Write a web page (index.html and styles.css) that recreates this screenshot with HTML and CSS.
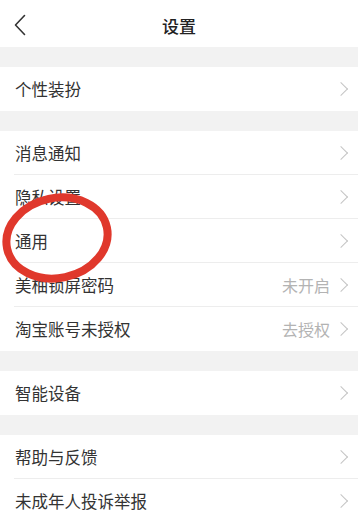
FILE: index.html
```html
<!DOCTYPE html>
<html lang="zh">
<head>
<meta charset="utf-8">
<link rel="stylesheet" href="styles.css">
</head>
<body>
<div class="page">
  <header class="nav">
    <svg class="back" width="12" height="22" viewBox="0 0 12 22"><path d="M10.5 1.5 L1.5 11 L10.5 20.5" fill="none" stroke="#333" stroke-width="1.6" stroke-linecap="round" stroke-linejoin="round"/></svg>
    <h1 class="title">设置</h1>
  </header>

  <section class="group">
    <div class="row"><span class="label">个性装扮</span><span class="chev"></span></div>
  </section>

  <section class="group">
    <div class="row"><span class="label">消息通知</span><span class="chev"></span></div>
    <div class="row"><span class="label">隐私设置</span><span class="chev"></span></div>
    <div class="row"><span class="label">通用</span><span class="chev"></span></div>
    <div class="row"><span class="label">美柚锁屏密码</span><span class="value">未开启</span><span class="chev"></span></div>
    <div class="row"><span class="label">淘宝账号未授权</span><span class="value">去授权</span><span class="chev"></span></div>
  </section>

  <section class="group">
    <div class="row"><span class="label">智能设备</span><span class="chev"></span></div>
  </section>

  <section class="group">
    <div class="row"><span class="label">帮助与反馈</span><span class="chev"></span></div>
    <div class="row"><span class="label">未成年人投诉举报</span><span class="chev"></span></div>
  </section>

  <svg class="mark" width="130" height="115" viewBox="0 0 130 115">
    <ellipse cx="57" cy="52" rx="51" ry="40" fill="none" stroke="#e0382c" stroke-width="8" transform="rotate(-12 57 52)"/>
  </svg>
</div>
</body>
</html>
```

FILE: styles.css
```css
html, body {
  margin: 0;
  padding: 0;
  background: #f2f2f2;
}
body {
  font-family: "Noto Sans CJK SC", "Noto Sans", sans-serif;
  color: #333;
}
.page {
  position: relative;
  width: 358px;
  height: 517px;
  overflow: hidden;
  background: #f2f2f2;
}
.nav {
  height: 47px;
  background: #fff;
  display: flex;
  align-items: center;
  justify-content: center;
  position: relative;
}
.back {
  position: absolute;
  left: 14px;
  top: 14px;
}
.title {
  margin: 0;
  font-size: 17px;
  font-weight: 500;
  color: #222;
  line-height: 1;
  margin-top: 4px;
}
.group {
  background: #fff;
  margin-top: 20px;
  padding-left: 14px;
}
.row {
  height: 43px;
  display: flex;
  align-items: center;
  border-bottom: 1px solid #ededed;
  padding-right: 11px;
}
.row:last-child {
  height: 44px;
  border-bottom: none;
}
.label {
  flex: 1;
  font-size: 16.5px;
  color: #333;
  padding-left: 1px;
}
.value {
  font-size: 16px;
  color: #b3b3b3;
  margin-right: 6px;
}
.chev {
  width: 9px;
  height: 9px;
  border-top: 1.3px solid #c4c4c4;
  border-right: 1.3px solid #c4c4c4;
  transform: rotate(45deg);
  margin-right: 1px;
}
.mark {
  position: absolute;
  left: 0;
  top: 186px;
}
```
